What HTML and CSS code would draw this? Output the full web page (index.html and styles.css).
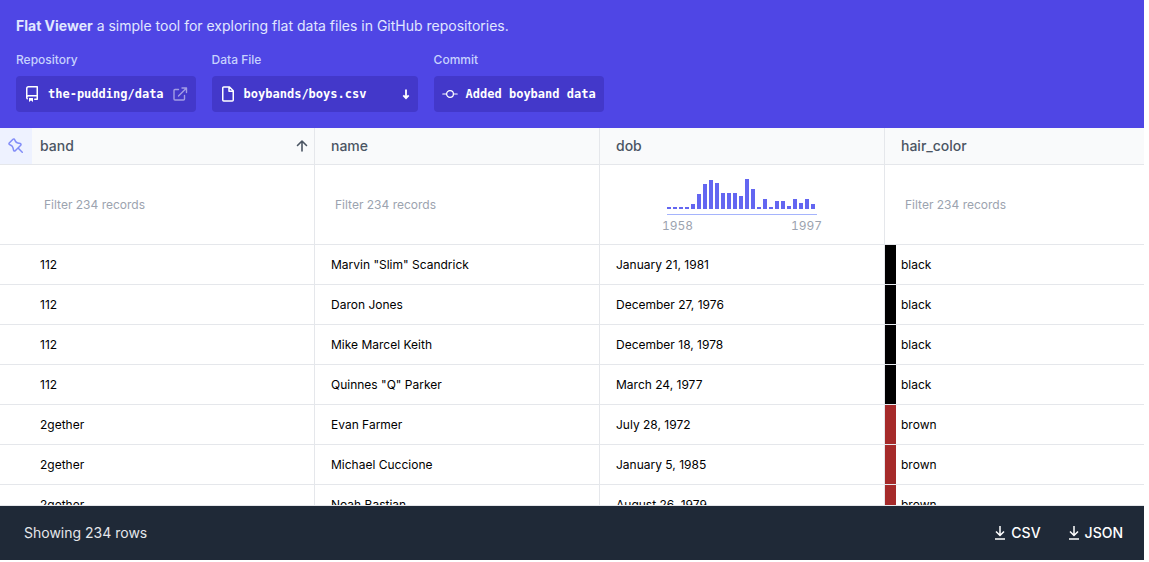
FILE: index.html
```html
<!DOCTYPE html>
<html lang="en">
<head>
<meta charset="utf-8">
<title>Flat Viewer</title>
<link rel="stylesheet" href="styles.css">
</head>
<body>
<div class="app">
  <header class="header">
    <p class="tagline"><strong>Flat Viewer</strong> a simple tool for exploring flat data files in GitHub repositories.</p>
    <div class="pickers">
      <div class="picker">
        <span class="picker-label" id="repo-label">Repository</span>
        <a class="picker-control" href="#repository" aria-describedby="repo-label">
          <svg class="icon" viewBox="0 0 16 16" fill="currentColor" aria-hidden="true"><path fill-rule="evenodd" d="M2 2.500A2.500 2.500 0 014.500 0h8.750a.75.75 0 01.75.75v12.500a.75.75 0 01-.75.75h-2.500a.75.75 0 110-1.500h1.750v-2h-8a1 1 0 00-.714 1.700.75.75 0 01-1.072 1.050A2.495 2.495 0 012 11.500v-9zm10.500-1V9h-8c-.356 0-.694.074-1 .208V2.500a1 1 0 011-1h8zM5 12.250v3.250a.25.25 0 00.4.2l1.450-1.087a.25.25 0 01.3 0L8.600 15.700a.25.25 0 00.4-.2v-3.250a.25.25 0 00-.25-.25h-3.500a.25.25 0 00-.25.25z"/></svg>
          <span>the-pudding/data</span>
          <svg class="icon icon-faded" viewBox="0 0 16 16" fill="none" stroke="currentColor" stroke-width="1.400" stroke-linecap="round" stroke-linejoin="round" aria-hidden="true"><path d="M6.500 3.500H3a1 1 0 00-1 1V13a1 1 0 001 1h8.500a1 1 0 001-1V9.500M10 2h4.500v4.500M14.300 2.200L6.500 10"/></svg>
        </a>
      </div>
      <div class="picker">
        <span class="picker-label" id="file-label">Data File</span>
        <button class="picker-control picker-file" type="button" aria-describedby="file-label">
          <svg class="icon" viewBox="0 0 16 16" fill="none" stroke="currentColor" stroke-width="1.500" stroke-linejoin="round" aria-hidden="true"><path d="M9.500 1H3.750a1 1 0 00-1 1v12a1 1 0 001 1h8.500a1 1 0 001-1V4.750zM9 1v4.250h4.250"/></svg>
          <span class="picker-value">boybands/boys.csv</span>
          <svg class="arrow" viewBox="0 0 8 16" fill="none" stroke="currentColor" stroke-width="1.800" aria-hidden="true"><path d="M4 3.500v8.500M1.300 9.300L4 12.200l2.700-2.900"/></svg>
        </button>
      </div>
      <div class="picker">
        <span class="picker-label" id="commit-label">Commit</span>
        <button class="picker-control" type="button" aria-describedby="commit-label">
          <svg class="icon" viewBox="0 0 16 16" fill="none" stroke="currentColor" stroke-width="1.200" stroke-linecap="round" aria-hidden="true"><circle cx="8" cy="8" r="3.400"/><path d="M.8 8h3.800M11.400 8h3.800"/></svg>
          <span>Added boyband data</span>
        </button>
      </div>
    </div>
  </header>

  <main class="grid">
    <table class="table">
      <colgroup><col class="col-band"><col class="col-data"><col class="col-data"><col></colgroup>
      <thead>
        <tr class="names">
          <th scope="col">
            <div class="head-pinned">
              <button class="pin" type="button" aria-label="Unpin band"><svg class="icon" viewBox="0 0 16 16" fill="currentColor" aria-hidden="true"><path fill-rule="evenodd" d="M4.456.734a1.750 1.750 0 012.826.504l.613 1.327a3.081 3.081 0 002.084 1.707l2.454.584c1.332.317 1.800 1.972.832 2.940L11.060 10l3.720 3.720a.75.75 0 11-1.061 1.060L10 11.060l-2.204 2.205c-.968.968-2.623.5-2.940-.832l-.584-2.454a3.081 3.081 0 00-1.707-2.084l-1.327-.613a1.750 1.750 0 01-.504-2.826L4.456.734zM5.920 1.866a.25.25 0 00-.404-.072L1.794 5.516a.25.25 0 00.072.404l1.328.613A4.582 4.582 0 015.730 9.630l.584 2.454a.25.25 0 00.420.120l5.470-5.470a.25.25 0 00-.120-.420L9.630 5.730a4.581 4.581 0 01-3.098-2.537L5.920 1.866z"/></svg></button>
              <span class="head-name">band</span>
              <svg class="sort" viewBox="0 0 16 16" fill="none" stroke="currentColor" stroke-width="1.600" stroke-linecap="round" stroke-linejoin="round" aria-hidden="true"><path d="M8 13V3M3.500 7.500L8 3l4.500 4.500"/></svg>
            </div>
          </th>
          <th scope="col">name</th>
          <th scope="col">dob</th>
          <th scope="col">hair_color</th>
        </tr>
        <tr class="filters">
          <td><input class="filter" type="text" placeholder="Filter 234 records" aria-label="Filter band"></td>
          <td><input class="filter" type="text" placeholder="Filter 234 records" aria-label="Filter name"></td>
          <td>
            <div class="histogram">
              <div class="bars">
                <i style="height:2px"></i><i style="height:2px"></i><i style="height:2px"></i><i style="height:2px"></i><i style="height:5px"></i><i style="height:15px"></i><i style="height:25px"></i><i style="height:29px"></i><i style="height:26px"></i><i style="height:16px"></i><i style="height:16px"></i><i style="height:16px"></i><i style="height:13px"></i><i style="height:30px"></i><i style="height:20px"></i><i style="height:2px"></i><i style="height:10px"></i><i style="height:2px"></i><i style="height:8px"></i><i style="height:8px"></i><i style="height:3px"></i><i style="height:10px"></i><i style="height:6px"></i><i style="height:10px"></i><i style="height:5px"></i>
              </div>
              <div class="range"><span>1958</span><span>1997</span></div>
            </div>
          </td>
          <td><input class="filter" type="text" placeholder="Filter 234 records" aria-label="Filter hair_color"></td>
        </tr>
      </thead>
      <tbody>
        <tr><td>112</td><td>Marvin "Slim" Scandrick</td><td>January 21, 1981</td><td class="swatch black">black</td></tr>
        <tr><td>112</td><td>Daron Jones</td><td>December 27, 1976</td><td class="swatch black">black</td></tr>
        <tr><td>112</td><td>Mike Marcel Keith</td><td>December 18, 1978</td><td class="swatch black">black</td></tr>
        <tr><td>112</td><td>Quinnes "Q" Parker</td><td>March 24, 1977</td><td class="swatch black">black</td></tr>
        <tr><td>2gether</td><td>Evan Farmer</td><td>July 28, 1972</td><td class="swatch brown">brown</td></tr>
        <tr><td>2gether</td><td>Michael Cuccione</td><td>January 5, 1985</td><td class="swatch brown">brown</td></tr>
        <tr><td>2gether</td><td>Noah Bastian</td><td>August 26, 1979</td><td class="swatch brown">brown</td></tr>
      </tbody>
    </table>
  </main>

  <footer class="footer">
    <span class="count">Showing 234 rows</span>
    <div class="downloads">
      <button class="download" type="button"><svg viewBox="0 0 14 14" fill="none" stroke="currentColor" stroke-width="1.500" aria-hidden="true"><path d="M7 0v9M3 5.500L7 9.500l4-4M2 13h10"/></svg>CSV</button>
      <button class="download" type="button"><svg viewBox="0 0 14 14" fill="none" stroke="currentColor" stroke-width="1.500" aria-hidden="true"><path d="M7 0v9M3 5.500L7 9.500l4-4M2 13h10"/></svg>JSON</button>
    </div>
  </footer>
</div>
</body>
</html>
```
FILE: styles.css
```css
* { box-sizing: border-box; }

body {
  margin: 0;
  background: #fff;
  font-family: Inter, "Liberation Sans", sans-serif;
  font-size: 14px;
  line-height: 20px;
}

button, input {
  font: inherit;
  color: inherit;
  border: 0;
  background: none;
  padding: 0;
  margin: 0;
}

.app {
  display: flex;
  flex-direction: column;
  height: 100vh;
  padding: 0 5px 2px 0;
}

/* Header */
.header {
  flex: none;
  padding: 16px;
  background: #4f46e5;
  color: #e0e7ff;
}

.tagline { margin: 0 0 16px; }
.tagline strong { font-weight: 700; }

.pickers { display: flex; gap: 16px; }

.picker {
  display: flex;
  flex-direction: column;
  gap: 8px;
}

.picker-label {
  font-size: 12px;
  line-height: 16px;
  font-weight: 500;
  color: #c7d2fe;
}

.picker-control {
  display: flex;
  align-items: center;
  gap: 8px;
  height: 36px;
  padding: 0 8px;
  border-radius: 4px;
  background: #4338ca;
  color: #fff;
  font: 700 12px/16px "DejaVu Sans Mono", monospace;
  text-align: left;
  text-decoration: none;
  white-space: nowrap;
}

.picker-file { min-width: 206px; }
.picker-value { flex: 1; }

.arrow {
  flex: none;
  width: 8px;
  height: 16px;
}

.icon {
  display: block;
  flex: none;
  width: 16px;
  height: 16px;
}

.icon-faded { opacity: .5; }

/* Data grid */
.grid {
  flex: 1;
  min-height: 0;
  overflow: hidden;
  border-bottom: 1px solid #e5e7eb;
}

.table {
  width: 100%;
  table-layout: fixed;
  border-collapse: separate;
  border-spacing: 0;
  font-size: 12px;
  line-height: 16px;
  color: #000;
}

.col-band { width: 315px; }
.col-data { width: 285px; }

th, td {
  height: 40px;
  padding: 0 16px;
  border: 0 solid #e5e7eb;
  border-width: 0 1px 1px 0;
  text-align: left;
  white-space: nowrap;
}

th:last-child, td:last-child { border-right: 0; }
tbody td:first-child { padding-left: 40px; }

.names th {
  height: 37px;
  background: #f9fafb;
  color: #4b5563;
  font-size: 14px;
  line-height: 20px;
  font-weight: 500;
}

.names th:first-child { padding: 0; }

.head-pinned {
  display: flex;
  align-items: center;
  gap: 8px;
  padding-right: 4px;
}

.head-name { flex: 1; }

.pin {
  display: flex;
  align-items: center;
  justify-content: center;
  width: 32px;
  height: 36px;
  background: #eef2ff;
  color: #818cf8;
}

.sort { width: 16px; height: 16px; }

.filters td { height: 80px; }
.filters td:first-child { padding-left: 40px; }

.filter {
  display: block;
  width: 100%;
  padding: 4px;
}

.filter::placeholder { color: #9ca3af; opacity: 1; }

.histogram {
  width: 150px;
  margin: 0 auto;
  padding-top: 4px;
}

.bars {
  display: flex;
  align-items: flex-end;
  gap: 2px;
  height: 36px;
  padding-bottom: 5px;
  border-bottom: 1px solid #a5b4fc;
}

.bars i { width: 4px; background: #6366f1; }

.range {
  display: flex;
  justify-content: space-between;
  margin: 3px -5px 0;
  color: #9ca3af;
  font-variant-numeric: tabular-nums;
}

.black { background: linear-gradient(#000, #000) left / 11px 100% no-repeat; }
.brown { background: linear-gradient(#a52a2a, #a52a2a) left / 11px 100% no-repeat; }
.swatch { background-clip: padding-box; background-origin: padding-box; }

/* Footer */
.footer {
  display: flex;
  flex: none;
  align-items: center;
  justify-content: space-between;
  height: 54px;
  padding: 0 21px 0 24px;
  background: #1f2937;
  color: #fff;
}

.count { color: #e5e7eb; }

.downloads {
  display: flex;
  gap: 26px;
  font-weight: 500;
}

.download {
  display: flex;
  align-items: center;
  gap: 4px;
}

.download svg { width: 14px; height: 14px; }
```
